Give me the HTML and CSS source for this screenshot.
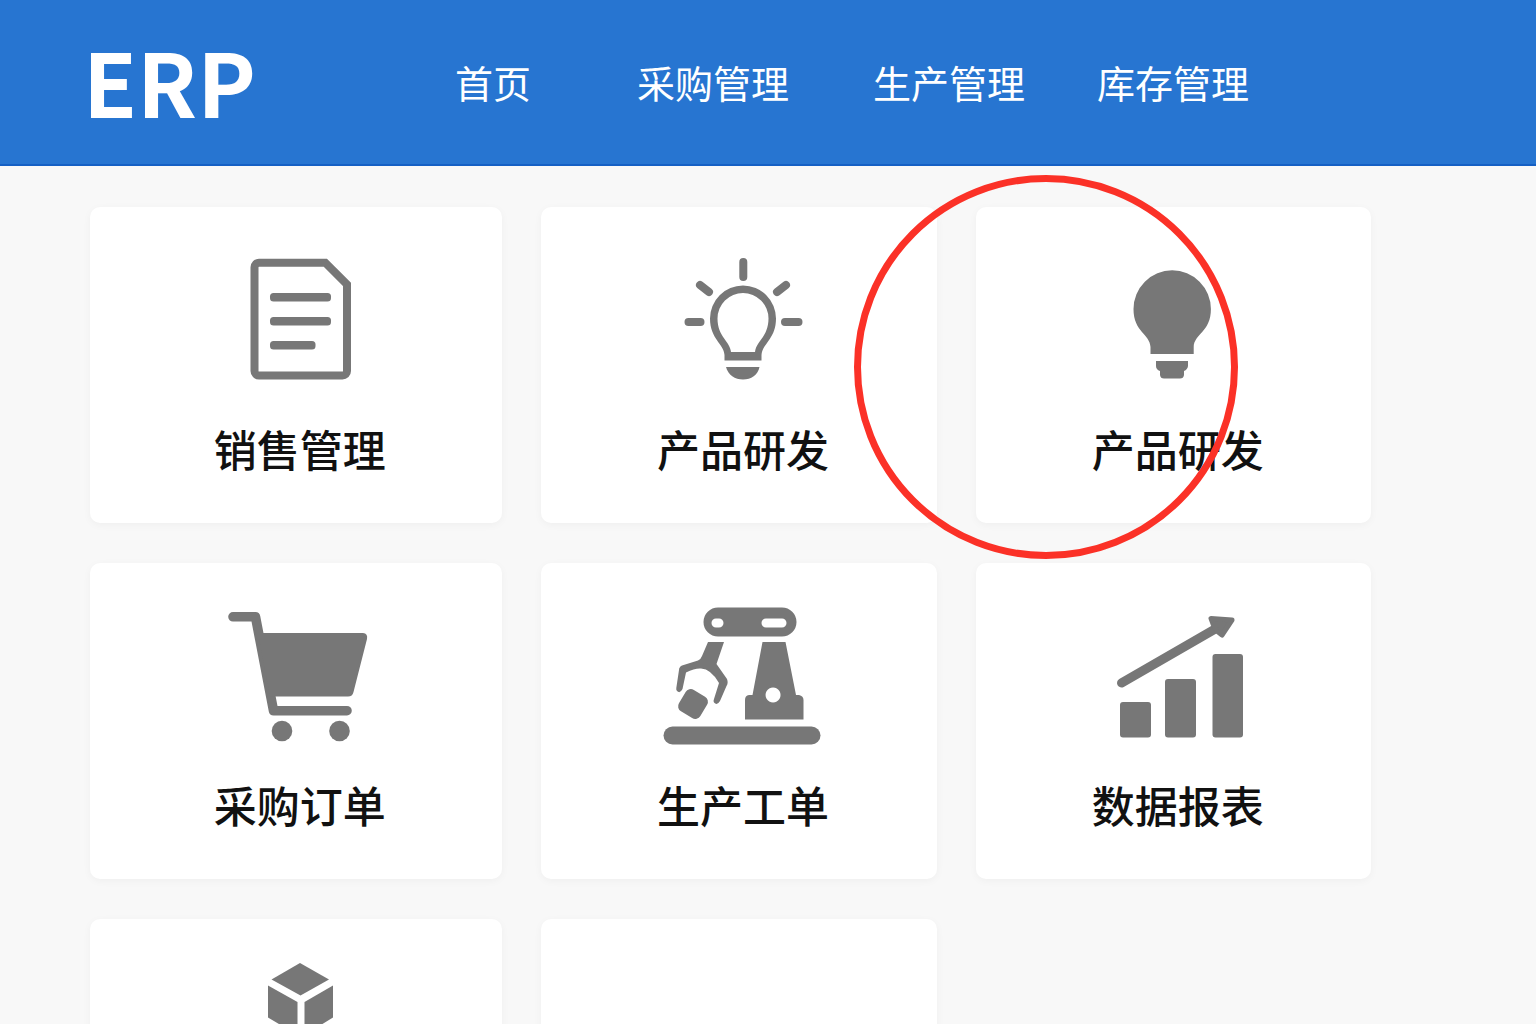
FILE: index.html
```html
<!DOCTYPE html>
<html lang="zh-CN">
<head>
  <meta charset="UTF-8" />
  <meta name="viewport" content="width=device-width, initial-scale=1.0"/>
  <title>ERP</title>
  <link rel="stylesheet" href="styles.css">
</head>
<body>
  <header class="header">
    <a class="logo" href="#">ERP</a>
    <nav class="nav">
      <a href="#">首页</a>
      <a href="#">采购管理</a>
      <a href="#">生产管理</a>
      <a href="#">库存管理</a>
    </nav>
  </header>

  <main class="cards">
    <a class="card" href="#">
      <svg class="icon" viewBox="0 0 200 150" aria-hidden="true">
        <path d="M59 22.7H125.3L147 44.4V131a4.5 4.5 0 0 1-4.5 4.5H59a4.5 4.5 0 0 1-4.5-4.5V27.2a4.5 4.5 0 0 1 4.5-4.5Z" fill="none" stroke="#777" stroke-width="8"/>
        <rect x="70" y="53" width="61" height="8.5" rx="3.5"/>
        <rect x="70" y="77" width="61" height="8.5" rx="3.5"/>
        <rect x="70" y="101" width="45.5" height="8.5" rx="3.5"/>
      </svg>
      <span class="label">销售管理</span>
    </a>

    <a class="card" href="#">
      <svg class="icon" viewBox="3 0 200 150" aria-hidden="true">
        <path d="M103.3 22V37M60 45L69 52M146 45L137 52M48.5 82H60.5M145 82H158.5" fill="none" stroke="#777" stroke-width="8" stroke-linecap="round"/>
        <path fill-rule="evenodd" d="M84.5 120.5V115C84 104 70 99 70 78.5a33 33 0 0 1 66 0C136 99 122 104 121.5 115V120.5ZM91 112H115C116 101 128.5 97 128.5 78.5a25.5 25.5 0 0 0-51 0C77.5 97 90 101 91 112Z"/>
        <path d="M86 127H119.5C118 135 111 139.5 103 139.5S88 135 86 127Z"/>
      </svg>
      <span class="label">产品研发</span>
    </a>

    <a class="card" href="#">
      <svg class="icon" viewBox="-2 0 200 150" aria-hidden="true">
        <path d="M70.5 114V107C70 94 53.5 92 53.5 69a38.7 38.7 0 0 1 77.4 0C131 92 114 94 113.7 107V114Z"/>
        <path d="M76 121H108V126Q107.5 129.5 104 131V135Q103.5 138.5 100 138.5H84Q80.5 138.5 80 135V131Q76 129.5 76 126Z"/>
      </svg>
      <span class="label">产品研发</span>
      <span class="marker"></span>
    </a>

    <a class="card" href="#">
      <svg class="icon" viewBox="0 1 200 150" aria-hidden="true">
        <path d="M33 21.8H55.5L73.5 115.7H147" fill="none" stroke="#777" stroke-width="9.6" stroke-linecap="round" stroke-linejoin="round"/>
        <path d="M58 38H163Q168 38.5 167 44L153.5 97Q152.5 101.5 148 101.5H70Z"/>
        <circle cx="82" cy="136" r="10.3"/>
        <circle cx="139.5" cy="136" r="10.3"/>
      </svg>
      <span class="label">采购订单</span>
    </a>

    <a class="card" href="#">
      <svg class="icon" viewBox="3 1 200 150" aria-hidden="true">
        <path fill-rule="evenodd" d="M78 12.5H142a14.5 14.5 0 0 1 0 29H78a14.5 14.5 0 0 1 0-29ZM76 23.5a4.5 4.5 0 0 0 0 9H79a4.5 4.5 0 0 0 0-9ZM126 23.5a4.5 4.5 0 0 0 0 9H142a4.5 4.5 0 0 0 0-9Z"/>
        <path d="M68 47H84L76.5 69L87 84Q88.5 88 86.5 91L80 106Q77 111 74 107.5Q73 106 74 104L79 88Q71 74 61 73.5Q55 73 46 77.5L42.5 94Q40 99 37 96Q36 95 36.3 93L39 75Q39 72 42 70.5L58 65.5Q61 64 62 61Z"/>
        <rect x="40.5" y="96.5" width="25" height="25" rx="6" transform="rotate(31 53 109)"/>
        <path fill-rule="evenodd" d="M122.5 47H145.5L156 100H159Q163.5 101 163.5 105V124.5H105V105Q105 100.5 109 100H112.5ZM133 92.5a7.5 7.5 0 1 0 .1 0Z"/>
        <rect x="23.5" y="131.5" width="157" height="18" rx="9"/>
      </svg>
      <span class="label">生产工单</span>
    </a>

    <a class="card" href="#">
      <svg class="icon" viewBox="-2 1 200 150" aria-hidden="true">
        <path d="M41.5 88L136 33.5" fill="none" stroke="#777" stroke-width="9" stroke-linecap="round"/>
        <path d="M131 23.5L152 25L142 40L137 36L133 29Z" stroke="#777" stroke-width="5" stroke-linejoin="round"/>
        <rect x="40" y="107" width="31" height="35.5" rx="3"/>
        <rect x="85" y="84" width="31" height="58.5" rx="3"/>
        <rect x="132.5" y="59" width="30.5" height="83.5" rx="3"/>
      </svg>
      <span class="label">数据报表</span>
    </a>

    <a class="card" href="#">
      <svg class="icon" viewBox="0 1 200 150" aria-hidden="true">
        <path d="M100 12L129 28.5L100.5 44.5L71.5 28.5Z"/>
        <path d="M68 34.5L97.5 51V84L68 66.5Z"/>
        <path d="M104.5 51L133 34.5V66.5L104.5 84Z"/>
      </svg>
    </a>

    <a class="card" href="#"></a>
  </main>
</body>
</html>
```
FILE: styles.css
```css
body {
  font-family: "Noto Sans CJK SC", sans-serif;
  margin: 0;
  background-color: #f8f8f8;
}

a {
  color: inherit;
  text-decoration: none;
}

.header {
  display: grid;
  grid-template-columns: 372px auto;
  align-items: center;
  min-height: 164px;
  padding: 0 83px;
  background-color: #2775d1;
  border-bottom: 2px solid #1560c4;
  color: #fff;
}

.logo {
  padding-bottom: 4px;
  font-size: 88px;
  font-weight: bold;
  line-height: 120px;
}

.nav {
  display: grid;
  grid-template-columns: 182px 236px 224px auto;
  font-size: 38px;
  line-height: 56px;
}

.cards {
  display: grid;
  grid-template-columns: 412fr 397fr 395fr;
  grid-auto-rows: minmax(316px, auto);
  gap: 40px 39px;
  padding: 41px 165px 40px 90px;
}

.card {
  position: relative;
  display: flex;
  flex-direction: column;
  align-items: center;
  box-sizing: border-box;
  padding: 33px 0 0 8px;
  background-color: #fff;
  border-radius: 10px;
  box-shadow: 0 2px 8px rgba(0, 0, 0, 0.04);
  color: #111;
}

.icon {
  width: 200px;
  height: 150px;
  fill: #777;
}

.label {
  margin-top: 26px;
  font-size: 43px;
  font-weight: 500;
  line-height: 64px;
}

/* red ring over the duplicated entry */
.marker {
  position: absolute;
  top: -32px;
  left: -122px;
  z-index: 1;
  box-sizing: border-box;
  width: 384px;
  height: 384px;
  border: 7px solid #fb3127;
  border-radius: 50%;
  pointer-events: none;
}
```
